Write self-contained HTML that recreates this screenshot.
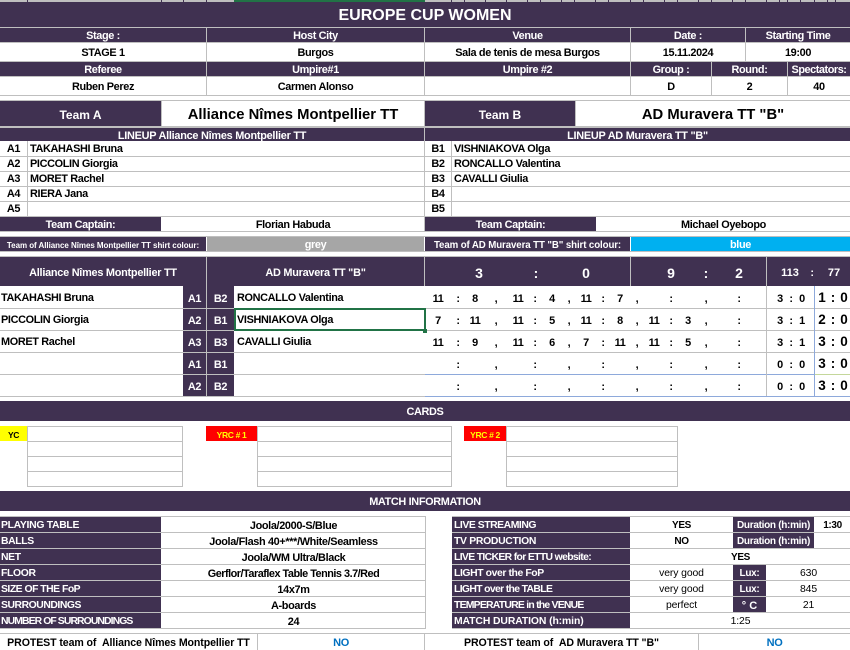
<!DOCTYPE html>
<html><head><meta charset="utf-8"><title>Europe Cup Women</title>
<style>
html,body{margin:0;padding:0;background:#fff}
#p{position:relative;width:850px;height:650px;overflow:hidden;background:#fff;font:bold 10.9px "Liberation Sans",Arial,sans-serif;color:#000;letter-spacing:-.35px}
#p div{position:absolute;box-sizing:border-box}
.d{background:#403151}
.g{background:#bfbfbf}
.b{background:#8ea9db}
.t{display:flex;align-items:center;justify-content:center;white-space:nowrap;padding-top:2px}
.w{color:#fff}
.s{justify-content:flex-start}
.r{font-weight:normal!important;font-size:10.4px!important;letter-spacing:-.1px!important}
.u{font-size:10px;letter-spacing:-.3px}
.l{font-size:10.4px}
.m{font-size:13.5px;letter-spacing:0}
.h{font-size:14px;letter-spacing:0}
</style></head><body><div id="p">
<!-- top strip -->
<div class="g" style="left:0;top:0;width:850px;height:2px"></div>
<div style="left:234px;top:0;width:191px;height:2px;background:#217346"></div>
<div class="d" style="left:27px;top:0;width:1px;height:2px"></div><div class="d" style="left:161px;top:0;width:1px;height:2px"></div><div class="d" style="left:183px;top:0;width:1px;height:2px"></div><div class="d" style="left:206px;top:0;width:1px;height:2px"></div>
<div class="d" style="left:451px;top:0;width:1px;height:2px"></div><div class="d" style="left:464px;top:0;width:1px;height:2px"></div><div class="d" style="left:485px;top:0;width:1px;height:2px"></div><div class="d" style="left:506px;top:0;width:1px;height:2px"></div><div class="d" style="left:527px;top:0;width:1px;height:2px"></div><div class="d" style="left:540px;top:0;width:1px;height:2px"></div><div class="d" style="left:561px;top:0;width:1px;height:2px"></div><div class="d" style="left:574px;top:0;width:1px;height:2px"></div><div class="d" style="left:595px;top:0;width:1px;height:2px"></div><div class="d" style="left:608px;top:0;width:1px;height:2px"></div><div class="d" style="left:630px;top:0;width:1px;height:2px"></div><div class="d" style="left:643px;top:0;width:1px;height:2px"></div><div class="d" style="left:664px;top:0;width:1px;height:2px"></div><div class="d" style="left:677px;top:0;width:1px;height:2px"></div><div class="d" style="left:698px;top:0;width:1px;height:2px"></div><div class="d" style="left:711px;top:0;width:1px;height:2px"></div><div class="d" style="left:732px;top:0;width:1px;height:2px"></div><div class="d" style="left:745px;top:0;width:1px;height:2px"></div><div class="d" style="left:766px;top:0;width:1px;height:2px"></div><div class="d" style="left:779px;top:0;width:1px;height:2px"></div><div class="d" style="left:787px;top:0;width:1px;height:2px"></div><div class="d" style="left:800px;top:0;width:1px;height:2px"></div><div class="d" style="left:814px;top:0;width:1px;height:2px"></div><div class="d" style="left:827px;top:0;width:1px;height:2px"></div><div class="d" style="left:835px;top:0;width:1px;height:2px"></div>

<!-- title -->
<div class="d t w" style="left:0;top:2px;width:850px;height:25px;font-size:16px;letter-spacing:0">EUROPE CUP WOMEN</div>
<div class="g" style="left:0;top:27px;width:850px;height:69px"></div>
<div class="d t w" style="left:0;top:28px;width:206px;height:14px">Stage :</div>
<div class="d t w" style="left:207px;top:28px;width:217px;height:14px">Host City</div>
<div class="d t w" style="left:425px;top:28px;width:205px;height:14px">Venue</div>
<div class="d t w" style="left:631px;top:28px;width:114px;height:14px">Date :</div>
<div class="d t w" style="left:746px;top:28px;width:104px;height:14px">Starting Time</div>
<div class="t" style="background:#fff;left:0;top:43px;width:206px;height:18px">STAGE 1</div>
<div class="t" style="background:#fff;left:207px;top:43px;width:217px;height:18px">Burgos</div>
<div class="t" style="background:#fff;left:425px;top:43px;width:205px;height:18px">Sala de tenis de mesa Burgos</div>
<div class="t" style="background:#fff;left:631px;top:43px;width:114px;height:18px">15.11.2024</div>
<div class="t" style="background:#fff;left:746px;top:43px;width:104px;height:18px">19:00</div>
<div class="d t w" style="left:0;top:62px;width:206px;height:14px">Referee</div>
<div class="d t w" style="left:207px;top:62px;width:217px;height:14px">Umpire#1</div>
<div class="d t w" style="left:425px;top:62px;width:205px;height:14px">Umpire #2</div>
<div class="d t w" style="left:631px;top:62px;width:80px;height:14px">Group :</div>
<div class="d t w" style="left:712px;top:62px;width:75px;height:14px">Round:</div>
<div class="d t w" style="left:788px;top:62px;width:62px;height:14px;letter-spacing:-.45px">Spectators:</div>
<div class="t" style="background:#fff;left:0;top:77px;width:206px;height:18px">Ruben Perez</div>
<div class="t" style="background:#fff;left:207px;top:77px;width:217px;height:18px">Carmen Alonso</div>
<div class="t" style="background:#fff;left:425px;top:77px;width:205px;height:18px"></div>
<div class="t" style="background:#fff;left:631px;top:77px;width:80px;height:18px">D</div>
<div class="t" style="background:#fff;left:712px;top:77px;width:75px;height:18px">2</div>
<div class="t" style="background:#fff;left:788px;top:77px;width:62px;height:18px">40</div>

<!-- team row -->
<div class="g" style="left:0;top:100px;width:850px;height:1px"></div>
<div class="g" style="left:0;top:126px;width:850px;height:2px"></div>
<div class="d t w" style="left:0;top:101px;width:161px;height:25px;font-size:12px;letter-spacing:0">Team A</div>
<div class="t" style="left:162px;top:101px;width:262px;height:25px;font-size:14.8px;letter-spacing:0">Alliance Nîmes Montpellier TT</div>
<div class="g" style="left:161px;top:101px;width:1px;height:25px"></div>
<div class="g" style="left:424px;top:100px;width:1px;height:132px"></div>
<div class="d t w" style="left:425px;top:101px;width:150px;height:25px;font-size:12px;letter-spacing:0">Team B</div>
<div class="g" style="left:575px;top:101px;width:1px;height:25px"></div>
<div class="t" style="left:576px;top:101px;width:274px;height:25px;font-size:14.8px;letter-spacing:0">AD Muravera TT "B"</div>

<!-- lineups -->
<div class="d t w" style="left:0;top:128px;width:424px;height:13px;letter-spacing:-.25px">LINEUP Alliance Nîmes Montpellier TT</div>
<div class="d t w" style="left:425px;top:128px;width:425px;height:13px;letter-spacing:-.25px">LINEUP AD Muravera TT "B"</div>
<div class="g" style="left:0;top:156px;width:850px;height:1px"></div>
<div class="g" style="left:0;top:171px;width:850px;height:1px"></div>
<div class="g" style="left:0;top:186px;width:850px;height:1px"></div>
<div class="g" style="left:0;top:201px;width:850px;height:1px"></div>
<div class="g" style="left:0;top:216px;width:850px;height:1px"></div>
<div class="g" style="left:27px;top:141px;width:1px;height:75px"></div>
<div class="g" style="left:451px;top:141px;width:1px;height:75px"></div>
<div style="left:0;top:-1px;width:850px;height:0">
<div class="t" style="left:0;top:141px;width:27px;height:15px">A1</div>
<div class="t" style="left:0;top:156px;width:27px;height:15px">A2</div>
<div class="t" style="left:0;top:171px;width:27px;height:15px">A3</div>
<div class="t" style="left:0;top:186px;width:27px;height:15px">A4</div>
<div class="t" style="left:0;top:201px;width:27px;height:15px">A5</div>
<div class="t s" style="left:30px;top:141px;width:380px;height:15px">TAKAHASHI Bruna</div>
<div class="t s" style="left:30px;top:156px;width:380px;height:15px">PICCOLIN Giorgia</div>
<div class="t s" style="left:30px;top:171px;width:380px;height:15px">MORET Rachel</div>
<div class="t s" style="left:30px;top:186px;width:380px;height:15px">RIERA Jana</div>
<div class="t" style="left:425px;top:141px;width:26px;height:15px">B1</div>
<div class="t" style="left:425px;top:156px;width:26px;height:15px">B2</div>
<div class="t" style="left:425px;top:171px;width:26px;height:15px">B3</div>
<div class="t" style="left:425px;top:186px;width:26px;height:15px">B4</div>
<div class="t" style="left:425px;top:201px;width:26px;height:15px">B5</div>
<div class="t s" style="left:454px;top:141px;width:380px;height:15px">VISHNIAKOVA Olga</div>
<div class="t s" style="left:454px;top:156px;width:380px;height:15px">RONCALLO Valentina</div>
<div class="t s" style="left:454px;top:171px;width:380px;height:15px">CAVALLI Giulia</div>
</div>
<div class="d t w" style="left:0;top:217px;width:161px;height:14px">Team Captain:</div>
<div class="t" style="left:162px;top:217px;width:262px;height:14px">Florian Habuda</div>
<div class="d t w" style="left:425px;top:217px;width:171px;height:14px">Team Captain:</div>
<div class="t" style="left:597px;top:217px;width:253px;height:14px">Michael Oyebopo</div>
<div class="g" style="left:0;top:231px;width:850px;height:1px"></div>
<div class="g" style="left:0;top:236px;width:850px;height:1px"></div>
<div class="g" style="left:0;top:251px;width:850px;height:1px"></div>
<div class="d t w" style="left:0;top:237px;width:206px;height:14px;font-size:8px;letter-spacing:-.05px">Team of Alliance Nîmes Montpellier TT shirt colour:</div>
<div class="t w" style="left:207px;top:237px;width:217px;height:14px;background:#a6a6a6">grey</div>
<div class="d t w" style="left:425px;top:237px;width:205px;height:14px;font-size:9.7px;letter-spacing:-.1px">Team of AD Muravera TT "B" shirt colour:</div>
<div class="t w" style="left:631px;top:237px;width:219px;height:14px;background:#00b0f0">blue</div>

<!-- match table -->
<div class="g" style="left:0;top:256px;width:850px;height:1px"></div>
<div class="d" style="left:0;top:257px;width:850px;height:29px"></div>
<div class="g" style="left:206px;top:257px;width:1px;height:29px"></div>
<div class="g" style="left:424px;top:257px;width:1px;height:29px"></div>
<div class="g" style="left:630px;top:257px;width:1px;height:29px"></div>
<div class="g" style="left:766px;top:257px;width:1px;height:29px"></div>
<div class="t w" style="left:0;top:257px;width:206px;height:29px;letter-spacing:-.25px">Alliance Nîmes Montpellier TT</div>
<div class="t w" style="left:207px;top:257px;width:217px;height:29px;letter-spacing:-.25px">AD Muravera TT "B"</div>
<div class="t w h" style="left:469px;top:257px;width:20px;height:29px">3</div>
<div class="t w h" style="left:526px;top:257px;width:20px;height:29px">:</div>
<div class="t w h" style="left:576px;top:257px;width:20px;height:29px">0</div>
<div class="t w h" style="left:661px;top:257px;width:20px;height:29px">9</div>
<div class="t w h" style="left:696px;top:257px;width:20px;height:29px">:</div>
<div class="t w h" style="left:729px;top:257px;width:20px;height:29px">2</div>
<div class="t w" style="left:780px;top:257px;width:20px;height:29px;font-size:11px;letter-spacing:0">113</div>
<div class="t w" style="left:802px;top:257px;width:20px;height:29px;font-size:11px">:</div>
<div class="t w" style="left:824px;top:257px;width:20px;height:29px;font-size:11px;letter-spacing:0">77</div>

<div class="g" style="left:0;top:308px;width:850px;height:1px"></div>
<div class="g" style="left:0;top:330px;width:850px;height:1px"></div>
<div class="g" style="left:0;top:352px;width:850px;height:1px"></div>
<div class="g" style="left:0;top:374px;width:425px;height:1px"></div>
<div class="g" style="left:0;top:396px;width:425px;height:1px"></div>
<div class="b" style="left:425px;top:374px;width:425px;height:1px"></div>
<div class="b" style="left:425px;top:396px;width:425px;height:1px"></div>
<div style="left:815px;top:374px;width:35px;height:1px;background:#c4d79b"></div>
<div class="g" style="left:766px;top:286px;width:1px;height:110px"></div>
<div class="b" style="left:814px;top:286px;width:1px;height:111px"></div>
<div class="d" style="left:183px;top:286px;width:51px;height:110px"></div>
<div class="g" style="left:206px;top:286px;width:1px;height:110px"></div>
<div class="g" style="left:183px;top:308px;width:51px;height:1px"></div>
<div class="g" style="left:183px;top:330px;width:51px;height:1px"></div>
<div class="g" style="left:183px;top:352px;width:51px;height:1px"></div>
<div class="g" style="left:183px;top:374px;width:51px;height:1px"></div>
<div style="left:234px;top:308px;width:192px;height:23px;border:2px solid #217346"></div>
<div style="left:423px;top:329px;width:4px;height:4px;background:#217346;border:0"></div>
<div style="left:0;top:-1px;width:850px;height:0">
<div class="t w" style="left:183px;top:288px;width:23px;height:21px">A1</div><div class="t w" style="left:207px;top:288px;width:27px;height:21px">B2</div>
<div class="t w" style="left:183px;top:310px;width:23px;height:21px">A2</div><div class="t w" style="left:207px;top:310px;width:27px;height:21px">B1</div>
<div class="t w" style="left:183px;top:332px;width:23px;height:21px">A3</div><div class="t w" style="left:207px;top:332px;width:27px;height:21px">B3</div>
<div class="t w" style="left:183px;top:354px;width:23px;height:21px">A1</div><div class="t w" style="left:207px;top:354px;width:27px;height:21px">B1</div>
<div class="t w" style="left:183px;top:376px;width:23px;height:21px">A2</div><div class="t w" style="left:207px;top:376px;width:27px;height:21px">B2</div>
<div class="t s" style="left:1px;top:287px;width:180px;height:21px">TAKAHASHI Bruna</div>
<div class="t s" style="left:1px;top:309px;width:180px;height:21px">PICCOLIN Giorgia</div>
<div class="t s" style="left:1px;top:331px;width:180px;height:21px">MORET Rachel</div>
<div class="t s" style="left:237px;top:287px;width:180px;height:21px">RONCALLO Valentina</div>
<div class="t s" style="left:237px;top:309px;width:180px;height:21px">VISHNIAKOVA Olga</div>
<div class="t s" style="left:237px;top:331px;width:180px;height:21px">CAVALLI Giulia</div>

<!-- row 1 scores -->
<div class="t" style="left:428px;top:288px;width:20px;height:21px">11</div><div class="t" style="left:448px;top:288px;width:20px;height:21px">:</div><div class="t" style="left:465px;top:288px;width:20px;height:21px">8</div><div class="t" style="left:486px;top:288px;width:20px;height:21px">,</div><div class="t" style="left:508px;top:288px;width:20px;height:21px">11</div><div class="t" style="left:525px;top:288px;width:20px;height:21px">:</div><div class="t" style="left:542px;top:288px;width:20px;height:21px">4</div><div class="t" style="left:559px;top:288px;width:20px;height:21px">,</div><div class="t" style="left:576px;top:288px;width:20px;height:21px">11</div><div class="t" style="left:593px;top:288px;width:20px;height:21px">:</div><div class="t" style="left:610px;top:288px;width:20px;height:21px">7</div><div class="t" style="left:627px;top:288px;width:20px;height:21px">,</div><div class="t" style="left:661px;top:288px;width:20px;height:21px">:</div><div class="t" style="left:696px;top:288px;width:20px;height:21px">,</div><div class="t" style="left:729px;top:288px;width:20px;height:21px">:</div>
<div class="t" style="left:770px;top:288px;width:20px;height:21px">3</div><div class="t" style="left:781px;top:288px;width:20px;height:21px">:</div><div class="t" style="left:792px;top:288px;width:20px;height:21px">0</div>
<div class="t m" style="left:812px;top:287px;width:20px;height:21px">1</div><div class="t m" style="left:823px;top:287px;width:20px;height:21px">:</div><div class="t m" style="left:834px;top:287px;width:20px;height:21px">0</div>
<!-- row 2 -->
<div class="t" style="left:428px;top:310px;width:20px;height:21px">7</div><div class="t" style="left:448px;top:310px;width:20px;height:21px">:</div><div class="t" style="left:465px;top:310px;width:20px;height:21px">11</div><div class="t" style="left:486px;top:310px;width:20px;height:21px">,</div><div class="t" style="left:508px;top:310px;width:20px;height:21px">11</div><div class="t" style="left:525px;top:310px;width:20px;height:21px">:</div><div class="t" style="left:542px;top:310px;width:20px;height:21px">5</div><div class="t" style="left:559px;top:310px;width:20px;height:21px">,</div><div class="t" style="left:576px;top:310px;width:20px;height:21px">11</div><div class="t" style="left:593px;top:310px;width:20px;height:21px">:</div><div class="t" style="left:610px;top:310px;width:20px;height:21px">8</div><div class="t" style="left:627px;top:310px;width:20px;height:21px">,</div><div class="t" style="left:644px;top:310px;width:20px;height:21px">11</div><div class="t" style="left:661px;top:310px;width:20px;height:21px">:</div><div class="t" style="left:678px;top:310px;width:20px;height:21px">3</div><div class="t" style="left:696px;top:310px;width:20px;height:21px">,</div><div class="t" style="left:729px;top:310px;width:20px;height:21px">:</div>
<div class="t" style="left:770px;top:310px;width:20px;height:21px">3</div><div class="t" style="left:781px;top:310px;width:20px;height:21px">:</div><div class="t" style="left:792px;top:310px;width:20px;height:21px">1</div>
<div class="t m" style="left:812px;top:309px;width:20px;height:21px">2</div><div class="t m" style="left:823px;top:309px;width:20px;height:21px">:</div><div class="t m" style="left:834px;top:309px;width:20px;height:21px">0</div>
<!-- row 3 -->
<div class="t" style="left:428px;top:332px;width:20px;height:21px">11</div><div class="t" style="left:448px;top:332px;width:20px;height:21px">:</div><div class="t" style="left:465px;top:332px;width:20px;height:21px">9</div><div class="t" style="left:486px;top:332px;width:20px;height:21px">,</div><div class="t" style="left:508px;top:332px;width:20px;height:21px">11</div><div class="t" style="left:525px;top:332px;width:20px;height:21px">:</div><div class="t" style="left:542px;top:332px;width:20px;height:21px">6</div><div class="t" style="left:559px;top:332px;width:20px;height:21px">,</div><div class="t" style="left:576px;top:332px;width:20px;height:21px">7</div><div class="t" style="left:593px;top:332px;width:20px;height:21px">:</div><div class="t" style="left:610px;top:332px;width:20px;height:21px">11</div><div class="t" style="left:627px;top:332px;width:20px;height:21px">,</div><div class="t" style="left:644px;top:332px;width:20px;height:21px">11</div><div class="t" style="left:661px;top:332px;width:20px;height:21px">:</div><div class="t" style="left:678px;top:332px;width:20px;height:21px">5</div><div class="t" style="left:696px;top:332px;width:20px;height:21px">,</div><div class="t" style="left:729px;top:332px;width:20px;height:21px">:</div>
<div class="t" style="left:770px;top:332px;width:20px;height:21px">3</div><div class="t" style="left:781px;top:332px;width:20px;height:21px">:</div><div class="t" style="left:792px;top:332px;width:20px;height:21px">1</div>
<div class="t m" style="left:812px;top:331px;width:20px;height:21px">3</div><div class="t m" style="left:823px;top:331px;width:20px;height:21px">:</div><div class="t m" style="left:834px;top:331px;width:20px;height:21px">0</div>
<!-- row 4 -->
<div class="t" style="left:448px;top:354px;width:20px;height:21px">:</div><div class="t" style="left:486px;top:354px;width:20px;height:21px">,</div><div class="t" style="left:525px;top:354px;width:20px;height:21px">:</div><div class="t" style="left:559px;top:354px;width:20px;height:21px">,</div><div class="t" style="left:593px;top:354px;width:20px;height:21px">:</div><div class="t" style="left:627px;top:354px;width:20px;height:21px">,</div><div class="t" style="left:661px;top:354px;width:20px;height:21px">:</div><div class="t" style="left:696px;top:354px;width:20px;height:21px">,</div><div class="t" style="left:729px;top:354px;width:20px;height:21px">:</div>
<div class="t" style="left:770px;top:354px;width:20px;height:21px">0</div><div class="t" style="left:781px;top:354px;width:20px;height:21px">:</div><div class="t" style="left:792px;top:354px;width:20px;height:21px">0</div>
<div class="t m" style="left:812px;top:353px;width:20px;height:21px">3</div><div class="t m" style="left:823px;top:353px;width:20px;height:21px">:</div><div class="t m" style="left:834px;top:353px;width:20px;height:21px">0</div>
<!-- row 5 -->
<div class="t" style="left:448px;top:376px;width:20px;height:21px">:</div><div class="t" style="left:486px;top:376px;width:20px;height:21px">,</div><div class="t" style="left:525px;top:376px;width:20px;height:21px">:</div><div class="t" style="left:559px;top:376px;width:20px;height:21px">,</div><div class="t" style="left:593px;top:376px;width:20px;height:21px">:</div><div class="t" style="left:627px;top:376px;width:20px;height:21px">,</div><div class="t" style="left:661px;top:376px;width:20px;height:21px">:</div><div class="t" style="left:696px;top:376px;width:20px;height:21px">,</div><div class="t" style="left:729px;top:376px;width:20px;height:21px">:</div>
<div class="t" style="left:770px;top:376px;width:20px;height:21px">0</div><div class="t" style="left:781px;top:376px;width:20px;height:21px">:</div><div class="t" style="left:792px;top:376px;width:20px;height:21px">0</div>
<div class="t m" style="left:812px;top:375px;width:20px;height:21px">3</div><div class="t m" style="left:823px;top:375px;width:20px;height:21px">:</div><div class="t m" style="left:834px;top:375px;width:20px;height:21px">0</div>
</div>

<!-- cards -->
<div class="d t w" style="left:0;top:401px;width:850px;height:20px">CARDS</div>
<div class="t" style="left:0;top:426px;width:27px;height:15px;background:#ff0;font-size:8.5px">YC</div>
<div style="left:27px;top:426px;width:156px;height:61px;border:1px solid #bfbfbf"></div>
<div class="g" style="left:27px;top:441px;width:156px;height:1px"></div><div class="g" style="left:27px;top:456px;width:156px;height:1px"></div><div class="g" style="left:27px;top:471px;width:156px;height:1px"></div>
<div class="t" style="left:206px;top:426px;width:51px;height:15px;background:#f00;color:#ff0;font-size:8.5px">YRC # 1</div>
<div style="left:257px;top:426px;width:195px;height:61px;border:1px solid #bfbfbf"></div>
<div class="g" style="left:257px;top:441px;width:195px;height:1px"></div><div class="g" style="left:257px;top:456px;width:195px;height:1px"></div><div class="g" style="left:257px;top:471px;width:195px;height:1px"></div>
<div class="t" style="left:464px;top:426px;width:42px;height:15px;background:#f00;color:#ff0;font-size:8.5px">YRC # 2</div>
<div style="left:506px;top:426px;width:172px;height:61px;border:1px solid #bfbfbf"></div>
<div class="g" style="left:506px;top:441px;width:172px;height:1px"></div><div class="g" style="left:506px;top:456px;width:172px;height:1px"></div><div class="g" style="left:506px;top:471px;width:172px;height:1px"></div>

<!-- match info -->
<div class="d t w" style="left:0;top:491px;width:850px;height:20px">MATCH INFORMATION</div>
<div class="g" style="left:0;top:516px;width:425px;height:1px"></div><div class="g" style="left:452px;top:516px;width:398px;height:1px"></div>
<div class="g" style="left:0;top:532px;width:425px;height:1px"></div><div class="g" style="left:452px;top:532px;width:398px;height:1px"></div>
<div class="g" style="left:0;top:548px;width:425px;height:1px"></div><div class="g" style="left:452px;top:548px;width:398px;height:1px"></div>
<div class="g" style="left:0;top:564px;width:425px;height:1px"></div><div class="g" style="left:452px;top:564px;width:398px;height:1px"></div>
<div class="g" style="left:0;top:580px;width:425px;height:1px"></div><div class="g" style="left:452px;top:580px;width:398px;height:1px"></div>
<div class="g" style="left:0;top:596px;width:425px;height:1px"></div><div class="g" style="left:452px;top:596px;width:398px;height:1px"></div>
<div class="g" style="left:0;top:612px;width:425px;height:1px"></div><div class="g" style="left:452px;top:612px;width:398px;height:1px"></div>
<div class="g" style="left:0;top:628px;width:425px;height:1px"></div><div class="g" style="left:452px;top:628px;width:398px;height:1px"></div>
<div class="g" style="left:425px;top:516px;width:1px;height:113px"></div>
<div class="d t w s l" style="left:0;top:517px;width:161px;height:15px;padding-left:1px;letter-spacing:-.3px">PLAYING TABLE</div><div class="t" style="left:162px;top:517px;width:263px;height:15px">Joola/2000-S/Blue</div>
<div class="d t w s l" style="left:0;top:533px;width:161px;height:15px;padding-left:1px">BALLS</div><div class="t" style="left:162px;top:533px;width:263px;height:15px">Joola/Flash 40+***/White/Seamless</div>
<div class="d t w s l" style="left:0;top:549px;width:161px;height:15px;padding-left:1px">NET</div><div class="t" style="left:162px;top:549px;width:263px;height:15px">Joola/WM Ultra/Black</div>
<div class="d t w s l" style="left:0;top:565px;width:161px;height:15px;padding-left:1px">FLOOR</div><div class="t" style="left:162px;top:565px;width:263px;height:15px;letter-spacing:-.5px">Gerflor/Taraflex Table Tennis 3.7/Red</div>
<div class="d t w s l" style="left:0;top:581px;width:161px;height:15px;padding-left:1px;letter-spacing:-.5px">SIZE OF THE FoP</div><div class="t" style="left:162px;top:581px;width:263px;height:15px">14x7m</div>
<div class="d t w s l" style="left:0;top:597px;width:161px;height:15px;padding-left:1px;letter-spacing:-.45px">SURROUNDINGS</div><div class="t" style="left:162px;top:597px;width:263px;height:15px">A-boards</div>
<div class="d t w s l" style="left:0;top:613px;width:161px;height:15px;padding-left:1px;letter-spacing:-.9px">NUMBER OF SURROUNDINGS</div><div class="t" style="left:162px;top:613px;width:263px;height:15px">24</div>

<div class="d t w s l" style="left:452px;top:517px;width:178px;height:15px;padding-left:2px;letter-spacing:-.45px">LIVE STREAMING</div><div class="t" style="left:631px;top:517px;width:101px;height:15px;font-size:10px">YES</div>
<div class="d t w u" style="left:733px;top:517px;width:81px;height:15px">Duration (h:min)</div><div class="t" style="left:815px;top:517px;width:35px;height:15px;font-size:10px">1:30</div>
<div class="d t w s l" style="left:452px;top:533px;width:178px;height:15px;padding-left:2px;letter-spacing:-.3px">TV PRODUCTION</div><div class="t" style="left:631px;top:533px;width:101px;height:15px;font-size:10px">NO</div>
<div class="d t w u" style="left:733px;top:533px;width:81px;height:15px">Duration (h:min)</div>
<div class="d t w s l" style="left:452px;top:549px;width:178px;height:15px;padding-left:2px;letter-spacing:-.65px">LIVE TICKER for ETTU website:</div><div class="t" style="left:631px;top:549px;width:219px;height:15px;font-size:10px">YES</div>
<div class="d t w s l" style="left:452px;top:565px;width:178px;height:15px;padding-left:2px;letter-spacing:-.4px">LIGHT over the FoP</div><div class="t r" style="left:631px;top:565px;width:101px;height:15px">very good</div>
<div class="d t w u" style="left:733px;top:565px;width:33px;height:15px">Lux:</div><div class="t r" style="left:767px;top:565px;width:83px;height:15px">630</div>
<div class="d t w s l" style="left:452px;top:581px;width:178px;height:15px;padding-left:2px;letter-spacing:-.65px">LIGHT over the TABLE</div><div class="t r" style="left:631px;top:581px;width:101px;height:15px">very good</div>
<div class="d t w u" style="left:733px;top:581px;width:33px;height:15px">Lux:</div><div class="t r" style="left:767px;top:581px;width:83px;height:15px">845</div>
<div class="d t w s l" style="left:452px;top:597px;width:178px;height:15px;padding-left:2px;letter-spacing:-.75px">TEMPERATURE in the VENUE</div><div class="t r" style="left:631px;top:597px;width:101px;height:15px">perfect</div>
<div class="d t w" style="left:733px;top:597px;width:33px;height:15px;font-size:11px;letter-spacing:0">° C</div><div class="t r" style="left:767px;top:597px;width:83px;height:15px">21</div>
<div class="d t w s l" style="left:452px;top:613px;width:178px;height:15px;padding-left:2px;letter-spacing:-.1px">MATCH DURATION (h:min)</div><div class="t r" style="left:631px;top:613px;width:219px;height:15px">1:25</div>

<!-- protest -->
<div class="g" style="left:0;top:633px;width:850px;height:1px"></div>
<div class="g" style="left:257px;top:634px;width:1px;height:16px"></div>
<div class="g" style="left:424px;top:634px;width:1px;height:16px"></div>
<div class="g" style="left:698px;top:634px;width:1px;height:16px"></div>
<div class="t" style="left:0;top:634px;width:257px;height:16px;font-size:10.6px;letter-spacing:-.1px">PROTEST team of &nbsp;Alliance Nîmes Montpellier TT</div>
<div class="t" style="left:258px;top:634px;width:166px;height:16px;color:#0070c0;font-size:11px">NO</div>
<div class="t" style="left:425px;top:634px;width:273px;height:16px;font-size:10.6px;letter-spacing:-.1px">PROTEST team of &nbsp;AD Muravera TT "B"</div>
<div class="t" style="left:699px;top:634px;width:151px;height:16px;color:#0070c0;font-size:11px">NO</div>
</div></body></html>
